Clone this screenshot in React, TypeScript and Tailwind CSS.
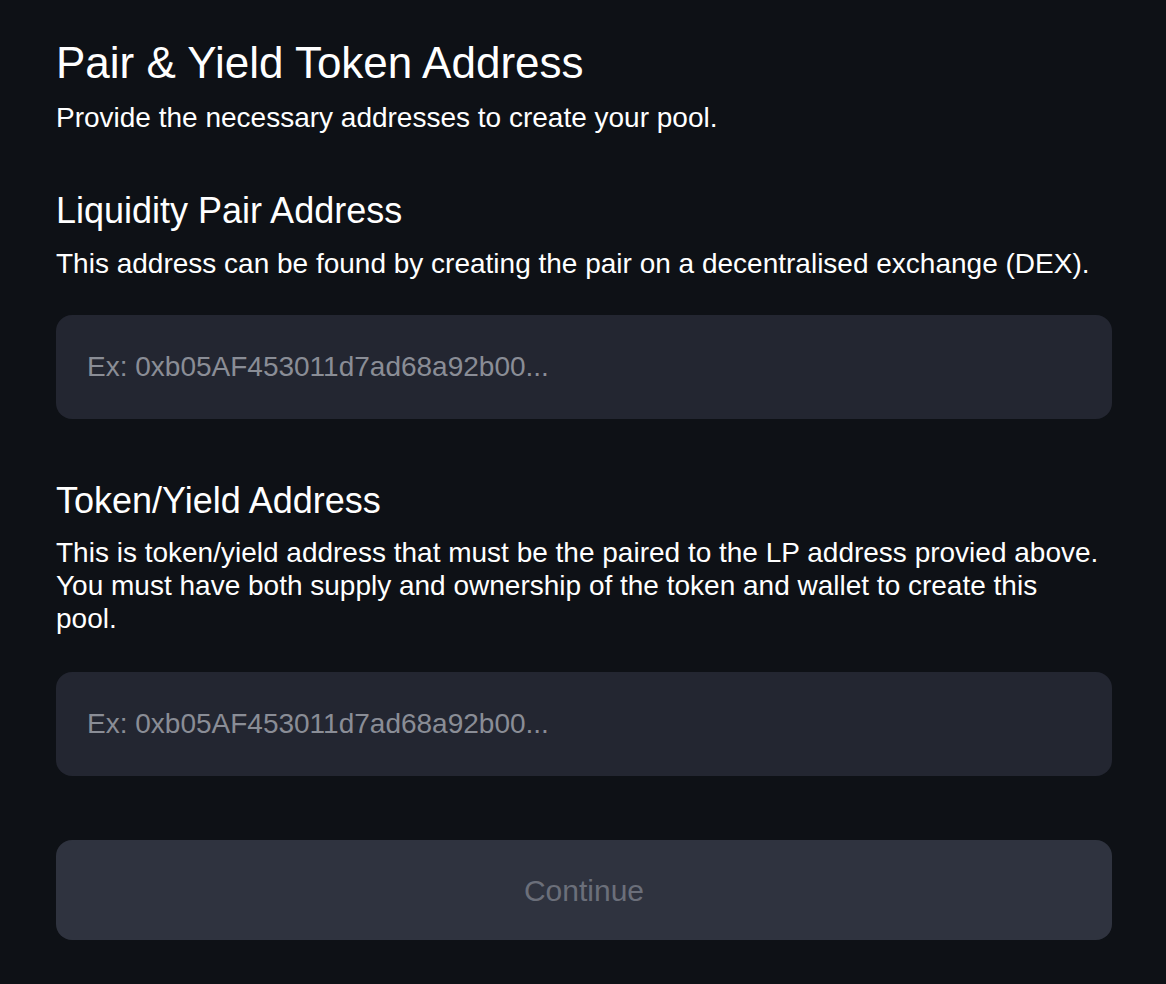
export default function App() {
  return (
    <main
      className="min-h-screen bg-[#0e1116] text-white px-14 pt-[37px] pb-10"
      style={{ fontFamily: '"Liberation Sans", Arial, sans-serif' }}
    >
      <div className="w-[1056px]">
        {/* Header */}
        <h1 className="text-[44px] leading-[52px]">Pair &amp; Yield Token Address</h1>
        <p className="mt-[12px] text-[28px] leading-[34px]">
          Provide the necessary addresses to create your pool.
        </p>

        {/* Liquidity pair */}
        <h2 className="mt-[54px] text-[36px] leading-[44px]">Liquidity Pair Address</h2>
        <p className="mt-[14px] text-[28px] leading-[34px]">
          This address can be found by creating the pair on a decentralised exchange (DEX).
        </p>
        <input
          className="mt-[34px] w-full h-[104px] rounded-2xl bg-[#232631] px-[31px] text-[28px] text-white placeholder:text-[#8a8d96] outline-none"
          placeholder="Ex: 0xb05AF453011d7ad68a92b00..."
        />

        {/* Token / yield */}
        <h2 className="mt-[60px] text-[36px] leading-[44px]">Token/Yield Address</h2>
        <p className="mt-[13px] w-[1044px] text-[28px] leading-[33px]">
          This is token/yield address that must be the paired to the LP address provied above. You
          must have both supply and ownership of the token and wallet to create this pool.
        </p>
        <input
          className="mt-[37px] w-full h-[104px] rounded-2xl bg-[#232631] px-[31px] text-[28px] text-white placeholder:text-[#8a8d96] outline-none"
          placeholder="Ex: 0xb05AF453011d7ad68a92b00..."
        />

        <button
          disabled
          className="mt-[64px] w-full h-[100px] rounded-2xl bg-[#2f333f] text-[30px] text-[#6b6f7a]"
        >
          Continue
        </button>
      </div>
    </main>
  );
}
